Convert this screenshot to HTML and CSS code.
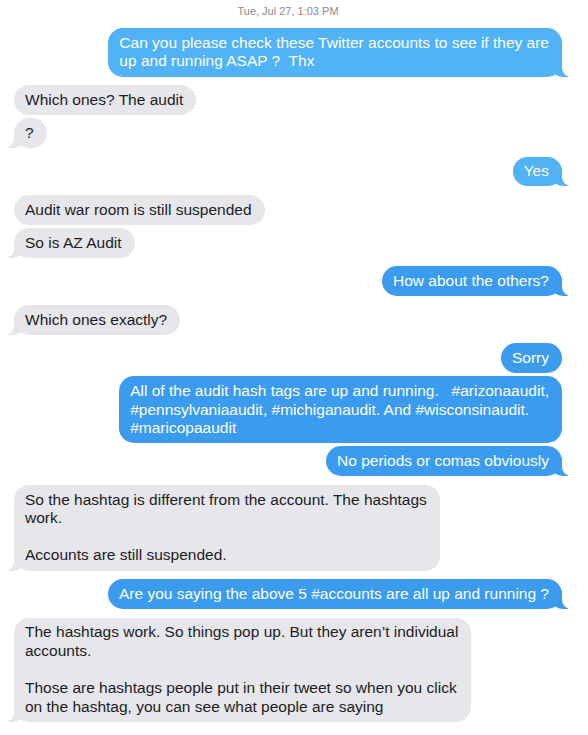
FILE: index.html
```html
<!DOCTYPE html>
<html lang="en">

<head>
    <meta charset="UTF-8">
    <meta name="viewport" content="width=device-width, initial-scale=1.0">
    <title>Messages</title>
    <link rel="stylesheet" href="styles.css">
</head>

<body>
    <div class="thread">
        <div class="stamp">Tue, Jul 27, 1:03 PM</div>

        <div class="msg sent light tail">Can you please check these Twitter accounts to see if they are<br>up and running ASAP ?&nbsp; Thx</div>

        <div class="msg recv change">Which ones? The audit</div>
        <div class="msg recv tail">?</div>

        <div class="msg sent light tail change">Yes</div>

        <div class="msg recv change">Audit war room is still suspended</div>
        <div class="msg recv tail">So is AZ Audit</div>

        <div class="msg sent tail change">How about the others?</div>

        <div class="msg recv tail change">Which ones exactly?</div>

        <div class="msg sent change">Sorry</div>
        <div class="msg sent">All of the audit hash tags are up and running. &nbsp; #arizonaaudit,<br>#pennsylvaniaaudit, #michiganaudit. And #wisconsinaudit.<br>#maricopaaudit</div>
        <div class="msg sent tail">No periods or comas obviously</div>

        <div class="msg recv tail change">So the hashtag is different from the account. The hashtags<br>work.<br><br>Accounts are still suspended.</div>

        <div class="msg sent tail change">Are you saying the above 5 #accounts are all up and running ?</div>

        <div class="msg recv tail change">The hashtags work. So things pop up. But they aren’t individual<br>accounts.<br><br>Those are hashtags people put in their tweet so when you click<br>on the hashtag, you can see what people are saying</div>
    </div>
</body>

</html>
```

FILE: styles.css
```css
* {
    margin: 0;
    padding: 0;
    box-sizing: border-box;
}

body {
    background: #ffffff;
    font-family: "Liberation Sans", Arial, sans-serif;
    overflow: hidden;
}

.thread {
    display: flex;
    flex-direction: column;
    padding: 0 26px 0 14px;
}

.stamp {
    text-align: center;
    font-size: 11px;
    line-height: 14px;
    padding: 4px 0 7px;
    color: #8a8a8f;
}

.msg {
    position: relative;
    padding: 5.7px 13px 5.7px 11px;
    border-radius: 15px;
    font-size: 15.5px;
    line-height: 18.6px;
    margin-top: 3px;
}

.msg.change {
    margin-top: 8.5px;
}

.sent {
    align-self: flex-end;
    background: #3a9bef;
    color: #ffffff;
}

.sent.light {
    background: #51b2f6;
}

.recv {
    align-self: flex-start;
    background: #e6e6eb;
    color: #1d1d1f;
}

/* bubble tails, drawn behind the bubble */
.tail::before,
.tail::after {
    content: '';
    position: absolute;
    bottom: 0;
    height: 18px;
    z-index: -1;
}

.sent.tail::before {
    right: -6px;
    width: 18px;
    background: inherit;
    border-bottom-left-radius: 14px 12px;
}

.sent.tail::after {
    right: -20px;
    width: 20px;
    background: #ffffff;
    border-bottom-left-radius: 9px;
}

.recv.tail::before {
    left: -6px;
    width: 18px;
    background: inherit;
    border-bottom-right-radius: 14px 12px;
}

.recv.tail::after {
    left: -20px;
    width: 20px;
    background: #ffffff;
    border-bottom-right-radius: 9px;
}
```
